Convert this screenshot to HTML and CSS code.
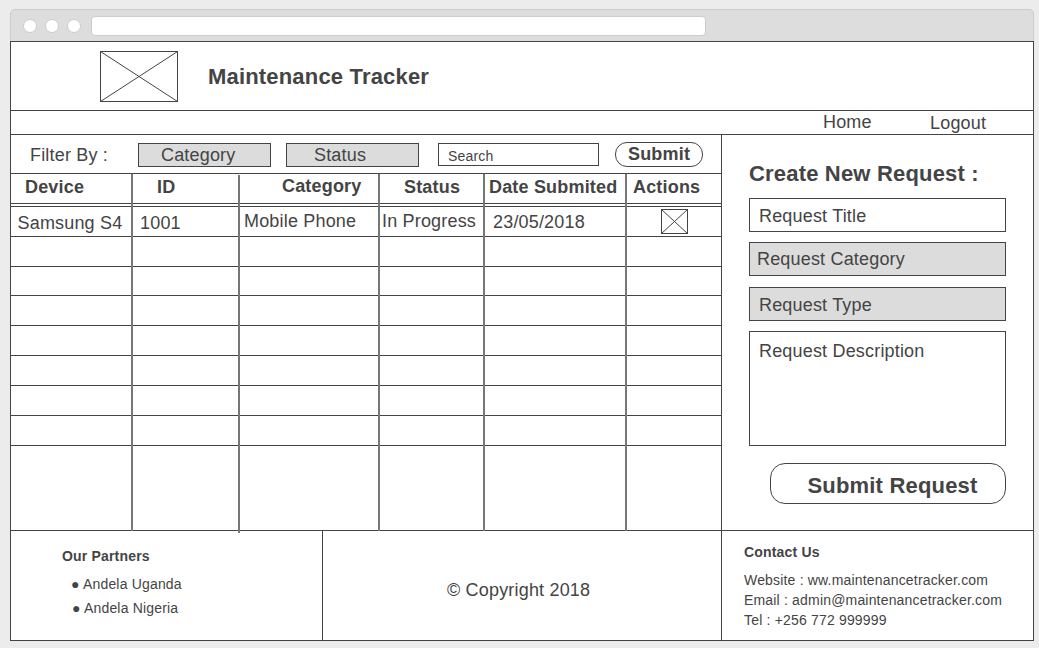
FILE: index.html
```html
<!DOCTYPE html>
<html lang="en">
<head>
<meta charset="utf-8">
<title>Maintenance Tracker</title>
<link rel="stylesheet" href="styles.css">
</head>
<body>
<div class="window">
  <div class="titlebar">
    <span class="dot"></span><span class="dot"></span><span class="dot"></span>
    <div class="address"></div>
  </div>
  <div class="page">
    <header class="header">
      <svg class="logo" width="78" height="51" viewBox="0 0 78 51"><rect x=".5" y=".5" width="77" height="50"/><path d="M.5 .5L77.5 50.5M77.5 .5L.5 50.5"/></svg>
      <h1 class="brand">Maintenance Tracker</h1>
    </header>
    <nav class="nav">
      <a class="nav-home">Home</a>
      <a class="nav-logout">Logout</a>
    </nav>
    <div class="main">
      <section class="list">
        <div class="filters">
          <span class="filter-label">Filter By :</span>
          <div class="select select-category">Category</div>
          <div class="select select-status">Status</div>
          <div class="search">Search</div>
          <div class="submit">Submit</div>
        </div>
        <div class="table">
          <div class="row head">
            <div class="h-device">Device</div><div class="h-id">ID</div><div class="h-category">Category</div><div class="h-status">Status</div><div class="h-date">Date Submited</div><div class="h-actions">Actions</div>
          </div>
          <div class="row divider"></div>
          <div class="row record">
            <div class="c-device">Samsung S4</div><div class="c-id">1001</div><div class="c-category">Mobile Phone</div><div class="c-status">In Progress</div><div class="c-date">23/05/2018</div>
            <div class="c-actions"><svg class="action" width="27" height="25" viewBox="0 0 27 25"><rect x=".5" y=".5" width="26" height="24"/><path d="M.5 .5L26.5 24.5M26.5 .5L.5 24.5"/></svg></div>
          </div>
          <div class="row"></div>
          <div class="row short"></div>
          <div class="row"></div>
          <div class="row"></div>
          <div class="row"></div>
          <div class="row"></div>
          <div class="row"></div>
          <div class="rules"><i></i><i class="long"></i><i></i><i></i><i></i></div>
        </div>
      </section>
      <aside class="request">
        <h2 class="request-title">Create New Request :</h2>
        <div class="field">Request Title</div>
        <div class="field field-category">Request Category</div>
        <div class="field field-type">Request Type</div>
        <div class="field field-description">Request Description</div>
        <div class="submit-request">Submit Request</div>
      </aside>
    </div>
    <footer class="footer">
      <div class="partners">
        <h3>Our Partners</h3>
        <p>● Andela Uganda</p>
        <p class="second">● Andela Nigeria</p>
      </div>
      <div class="copyright">© Copyright 2018</div>
      <div class="contact">
        <h3>Contact Us</h3>
        <p>Website : ww.maintenancetracker.com</p>
        <p>Email : admin@maintenancetracker.com</p>
        <p>Tel : +256 772 999999</p>
      </div>
    </footer>
  </div>
</div>
</body>
</html>
```
FILE: styles.css
```css
* { box-sizing: border-box; margin: 0; padding: 0; }
body {
  background: #ececec;
  color: #444;
  font: 18px/20px "Liberation Sans", Arial, sans-serif;
  letter-spacing: .01em;
  white-space: nowrap;
  overflow: hidden;
}
.window { width: 1024px; margin: 9px 0 0 10px; }
.titlebar {
  display: flex;
  gap: 8px;
  height: 32px;
  padding: 6px 0 0 12px;
  background: #ddd;
  border: 1px solid #ccc;
  border-bottom: 0;
  border-radius: 5px 5px 0 0;
}
.dot {
  width: 14px;
  height: 14px;
  margin-top: 3px;
  background: #fff;
  border: 1px solid #ccc;
  border-radius: 50%;
}
.address {
  width: 615px;
  height: 20px;
  margin-left: 2px;
  background: #fff;
  border: 1px solid #ccc;
  border-radius: 4px;
}
.page { height: 600px; background: #fff; border: 1px solid #444; }

.header { display: flex; height: 69px; padding: 9px 0 0 89px; border-bottom: 1px solid #444; }
.logo, .action { display: block; fill: none; stroke: #444; stroke-width: 1; }
.logo rect, .action rect { shape-rendering: crispEdges; }
.brand { margin: 14px 0 0 30px; font-size: 22px; line-height: 24px; }
.nav { display: flex; height: 24px; padding-left: 812px; border-bottom: 1px solid #444; }
.nav-home { width: 107px; padding-top: 1px; }
.nav-logout { padding-top: 2px; }

.main { display: flex; height: 395px; }
.list { width: 710px; }
.filters { display: flex; height: 39px; padding: 8px 0 0 19px; border-bottom: 1px solid #444; }
.filter-label { width: 108px; padding-top: 2px; }
.select {
  width: 133px;
  height: 24px;
  padding: 1px 0 0 22px;
  background: #dcdcdc;
  border: 1px solid #444;
}
.select-status { margin-left: 15px; padding-left: 27px; }
.search {
  width: 161px;
  height: 23px;
  margin-left: 19px;
  padding: 4px 0 0 9px;
  border: 1px solid #444;
  font-size: 14px;
  line-height: 16px;
}
.submit {
  width: 88px;
  height: 25px;
  margin: -1px 0 0 16px;
  padding: 1px 0 0 12px;
  border: 1px solid #444;
  border-radius: 12px;
  font-weight: bold;
}

.table { position: relative; height: 356px; }
.row, .rules { display: grid; grid-template-columns: 122px 107px 140px 105px 142px 94px; }
.row { height: 30px; border-bottom: 1px solid #444; }
.row.divider { height: 3px; }
.row.short { height: 29px; }
.head { font-weight: bold; }
.head > div { padding-top: 3px; }
.head .h-device { padding-left: 14px; }
.head .h-id { padding-left: 24px; }
.head .h-category { padding: 2px 0 0 42px; }
.head .h-status { padding-left: 24px; }
.head .h-date { padding-left: 4px; }
.head .h-actions { padding-left: 6px; }
.c-device { padding: 6px 0 0 6.5px; }
.c-id { padding: 6px 0 0 7px; }
.c-category { padding: 4px 0 0 4px; }
.c-status { padding: 4px 0 0 2px; }
.c-date { padding: 5px 0 0 8px; }
.c-actions { padding: 2px 0 0 34px; }
.rules { position: absolute; inset: 0 0 -1px; pointer-events: none; }
.rules i { border-right: 2px solid #777; }
.rules .long { margin: 1px 0 -2px; }

.request { width: 312px; padding: 27px 0 0 27px; border-left: 1px solid #444; }
.request-title { margin-bottom: -1px; font-size: 22px; line-height: 24px; }
.field {
  width: 257px;
  height: 34px;
  margin-top: 13px;
  padding: 7px 0 0 9px;
  border: 1px solid #444;
}
.field-category { margin-top: 10px; padding: 6px 0 0 7px; background: #dcdcdc; }
.field-type { margin-top: 11px; background: #dcdcdc; }
.field-description { height: 115px; margin-top: 10px; padding-top: 9px; }
.submit-request {
  width: 236px;
  height: 41px;
  margin: 17px 0 0 21px;
  padding: 10px 0 0 36.5px;
  border: 1px solid #444;
  border-radius: 15px;
  font-size: 22px;
  font-weight: bold;
  line-height: 24px;
}

.footer { display: flex; height: 110px; border-top: 1px solid #444; font-size: 14px; line-height: 16px; }
.footer h3 { font-size: 14px; }
.partners { width: 312px; padding: 17px 0 0 51px; border-right: 1px solid #444; }
.partners p { margin: 12px 0 0 9px; }
.partners .second { margin: 8px 0 0 10px; }
.copyright { width: 398px; padding: 49px 0 0 124px; font-size: 18px; line-height: 20px; }
.contact { width: 312px; padding: 13px 0 0 22px; border-left: 1px solid #444; }
.contact h3 { margin-bottom: 10px; }
.contact p { line-height: 20px; }
```
